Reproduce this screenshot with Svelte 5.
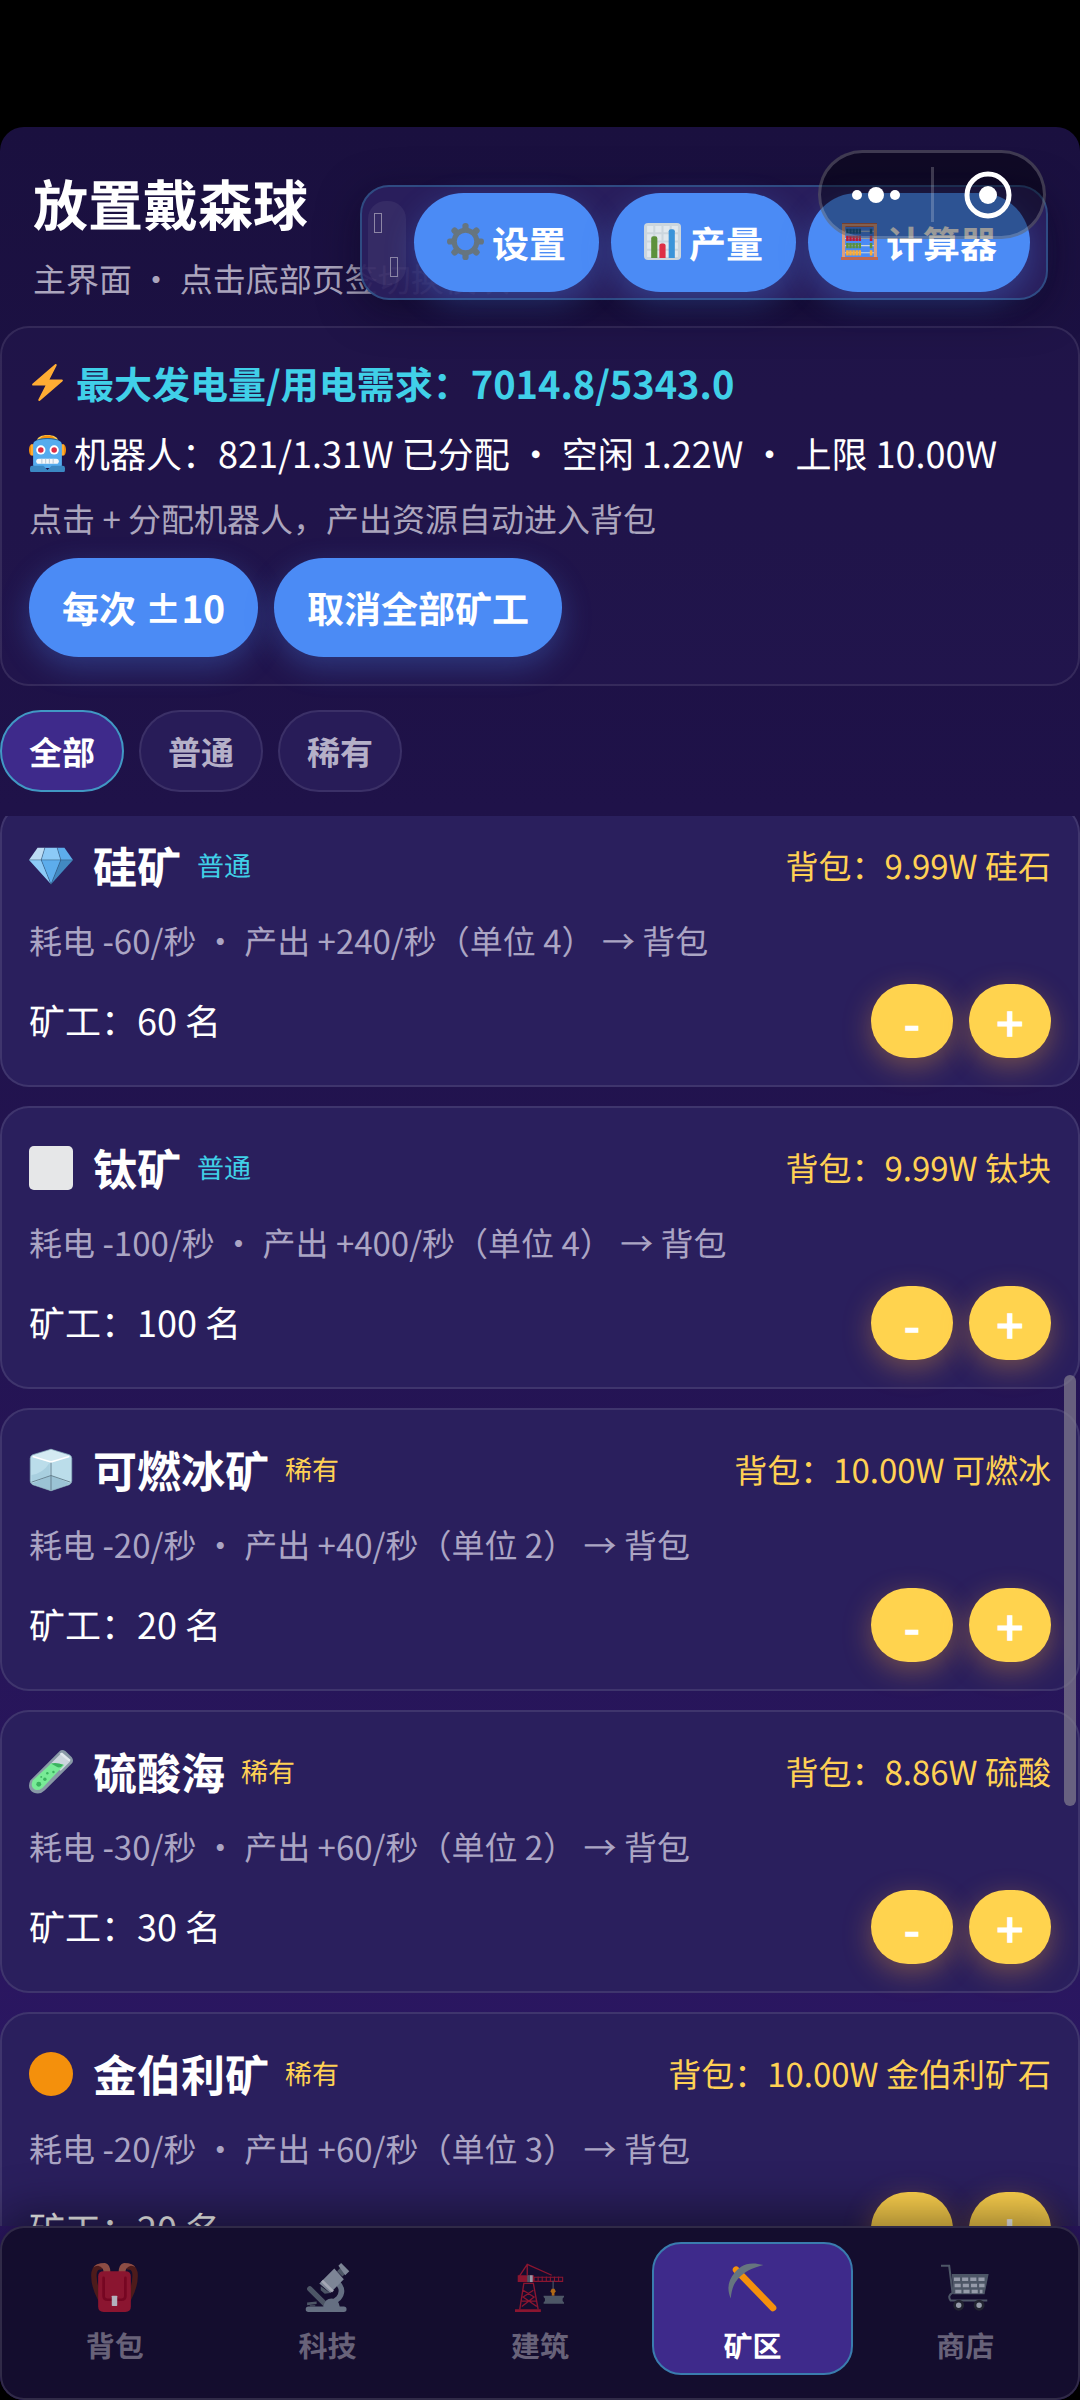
<script lang="ts">
  import { onMount } from "svelte";

  interface Mine {
    icon: string;
    name: string;
    rare: boolean;
    power: number;
    output: number;
    unit: number;
    workers: number;
    stock: string;
    item: string;
  }

  const mines: Mine[] = [
    { icon: "gem", name: "硅矿", rare: false, power: 60, output: 240, unit: 4, workers: 60, stock: "9.99W", item: "硅石" },
    { icon: "square", name: "钛矿", rare: false, power: 100, output: 400, unit: 4, workers: 100, stock: "9.99W", item: "钛块" },
    { icon: "ice", name: "可燃冰矿", rare: true, power: 20, output: 40, unit: 2, workers: 20, stock: "10.00W", item: "可燃冰" },
    { icon: "tube", name: "硫酸海", rare: true, power: 30, output: 60, unit: 2, workers: 30, stock: "8.86W", item: "硫酸" },
    { icon: "circle", name: "金伯利矿", rare: true, power: 20, output: 60, unit: 3, workers: 20, stock: "10.00W", item: "金伯利矿石" },
  ];

  const tools = [
    { icon: "gear", label: "设置" },
    { icon: "chart", label: "产量" },
    { icon: "abacus", label: "计算器" },
  ];

  const tabs = [
    { icon: "backpack", label: "背包" },
    { icon: "microscope", label: "科技" },
    { icon: "crane", label: "建筑" },
    { icon: "pick", label: "矿区" },
    { icon: "cart", label: "商店" },
  ];

  const filters = ["全部", "普通", "稀有"];

  let filter = $state("全部");
  let tab = $state("矿区");
  let list: HTMLElement;

  let shown = $derived(
    mines.filter((m) => filter === "全部" || m.rare === (filter === "稀有"))
  );

  // 恢复上次的滚动位置
  onMount(() => {
    list.scrollTop = 12;
  });
</script>

{#snippet icon(name: string)}
  <svg class="icon" viewBox="0 0 36 36" aria-hidden="true">
    {#if name === "bolt"}
      <path fill="#ffac33" d="M32.938 15.651C32.792 15.26 32.418 15 32 15H19.925L26.89 1.458c.219-.426.106-.947-.271-1.243C26.437.071 26.218 0 26 0c-.233 0-.466.082-.653.243L18 6.588 3.347 19.243c-.316.273-.43.714-.284 1.105S3.582 21 4 21h12.075L9.11 34.542c-.219.426-.106.947.271 1.243.182.144.401.215.619.215.233 0 .466-.082.653-.243L18 29.412l14.653-12.655c.317-.273.43-.714.285-1.106z" />
    {:else if name === "robot"}
      <ellipse fill="#f4900c" cx="33.5" cy="14.5" rx="2.5" ry="5.5" />
      <ellipse fill="#f4900c" cx="2.5" cy="14.5" rx="2.5" ry="5.5" />
      <path fill="#ffac33" d="M34 19a1 1 0 0 1-1 1h-3a1 1 0 0 1-1-1v-9a1 1 0 0 1 1-1h3a1 1 0 0 1 1 1v9zM7 19a1 1 0 0 1-1 1H3a1 1 0 0 1-1-1v-9a1 1 0 0 1 1-1h3a1 1 0 0 1 1 1v9z" />
      <path fill="#ffcc4d" d="M28 5c0 2.8-4.5 4-10 4S8 7.800 8 5s4.5-5 10-5 10 2.2 10 5z" />
      <path fill="#f4900c" d="M25 4.1c0 2-3.1 2.9-7 2.9s-7-.9-7-2.9S14.1.5 18 .5s7 1.600 7 3.6z" />
      <path fill="#269" d="M30.5 6.5C28 3.800 24 3 18 3S8 3.800 5.5 6.500L5 11h26z" />
      <path fill="#55acee" d="M30 6c-3-1-7-2-12-2S9 5 6 6c-2 .7-2 3-2 5v18c0 2 1 3 3 3h22c2 0 3-1 3-3V11c0-2 0-4.300-2-5z" />
      <path fill="#3b88c3" d="M35 33v-1a2 2 0 0 0-2-2H22l-4 4-4-4H3a2 2 0 0 0-2 2v1c0 1.100-.1 3 1 3h32c1.100 0 1-1.900 1-3z" />
      <circle fill="#fff" cx="24.5" cy="14.5" r="4.5" />
      <circle fill="#dd2e44" cx="24.5" cy="14.5" r="2.7" />
      <circle fill="#fff" cx="11.5" cy="14.5" r="4.5" />
      <circle fill="#dd2e44" cx="11.5" cy="14.5" r="2.7" />
      <rect fill="#f5f8fa" x="7" y="23" width="22" height="5" rx="2.5" />
      <path stroke="#b8cbd8" d="M12.5 23v5M16.2 23v5M19.8 23v5M23.5 23v5" />
    {:else if name === "gear"}
      <g fill="#66757f">
        {#each [0, 45, 90, 135, 180, 225, 270, 315] as angle}
          <path transform="rotate({angle} 18 18)" d="M15 8V2.5Q15 0 18 0t3 2.5V8z" />
        {/each}
      </g>
      <circle cx="18" cy="18" r="11" fill="none" stroke="#66757f" stroke-width="5" />
    {:else if name === "chart"}
      <rect fill="#ccd6dd" width="36" height="36" rx="4" />
      <path fill="#e1e8ed" d="M3 3h6v6H3zM11 3h6v6h-6zM19 3h6v6h-6zM27 3h6v6h-6zM3 11h6v6H3zM11 11h6v6h-6zM19 11h6v6h-6zM27 11h6v6h-6zM3 19h6v6H3zM11 19h6v6h-6zM19 19h6v6h-6zM27 19h6v6h-6zM3 27h6v6H3zM11 27h6v6h-6zM19 27h6v6h-6zM27 27h6v6h-6z" />
      <path fill="#5c913b" d="M7 34V15q0-2 2-2h2q2 0 2 2v19z" />
      <path fill="#dd2e44" d="M15 34V22q0-2 2-2h2q2 0 2 2v12z" />
      <path fill="#3b94d9" d="M24 34V8q0-2 2-2h2q2 0 2 2v26z" />
    {:else if name === "abacus"}
      <path stroke="#ccd6dd" d="M4 8h28M4 15h28M4 22h28M4 29h28" />
      <path fill="none" stroke="#d99e82" stroke-width="3" d="M2.5 34V2h31v32" />
      <path stroke="#c1694f" d="M1 .5h34M4.5 3.500h27" />
      <g stroke-width="5" stroke-dasharray="2.5 .5">
        <path stroke="#226699" d="M5 8h15M28 8h3" />
        <path stroke="#be1931" d="M5 15h15M28 15h3" />
        <path stroke="#5c913b" d="M5 22h15M28 22h3" />
        <path stroke="#ffac33" d="M5 29h15M28 29h3" />
      </g>
      <path fill="#c1694f" d="M0 33h36v3H0z" />
    {:else if name === "gem"}
      <path fill="#bdddf4" d="M13 3H7L0 13h10z" />
      <path fill="#5dadec" d="M36 13 29 3h-6l3 10z" />
      <path fill="#8ccaf7" d="M26 13 23 3H13l-3 10zM0 13l18 20-8-20z" />
      <path fill="#4289c1" d="M36 13 18 33l8-20z" />
      <path fill="#5dadec" d="M26 13H10l8 20z" />
      <path fill="none" stroke="#27506e" stroke-width=".4" d="M0 13h36M13 3l-3 10 8 20 8-20-3-10" />
    {:else if name === "square"}
      <rect fill="#e6e7e8" width="36" height="36" rx="4" />
    {:else if name === "ice"}
      <path fill="#bbddea" d="M3 5.500 18 1l15 4.5q2 1 2 3V27q0 2-2 3l-15 5-15-5q-2-1-2-3V8.500q0-2 2-3z" />
      <path fill="#d4eaf2" d="M2 6.500 18 1l16 5.5L18 12z" />
      <path fill="#9bc3d5" d="m2 29 16-6.5L34 29l-16 6z" />
      <path fill="#a8cfdf" d="M2 22q9-1 15-10v11L2 28z" />
      <path fill="none" stroke="#fff" stroke-width="1.2" d="m3 7 15 4.5L33 7" />
      <path fill="none" stroke="#5d7785" stroke-width=".7" d="m2 28 16-5.5L34 28M18 12v23" />
      <path fill="none" stroke="#88a9b8" stroke-width=".6" d="M3 5.500 18 1l15 4.5q2 1 2 3V27q0 2-2 3l-15 5-15-5q-2-1-2-3V8.500q0-2 2-3z" />
    {:else if name === "tube"}
      <path fill="#8899a6" d="M25 1q2-2 5 0l5 5q2 3 0 5L13 33q-4 4-9 2-6-3-3-10z" />
      <path fill="#ccd6dd" d="m26 3 7 7-7 7-9-5z" />
      <path fill="#78eb96" d="m18 11 11 1L11 31q-4 3-7 1t-1-7z" />
      <path fill="#3bb35f" d="M18 11q5-1 10 1-2 3-5 2z" />
      <circle fill="#3bb35f" cx="8" cy="28" r="2" />
      <circle fill="#3bb35f" cx="13" cy="24" r="1.4" />
      <circle fill="#3bb35f" cx="15" cy="19" r="1" />
      <circle fill="#3bb35f" cx="20" cy="18" r="1" />
      <circle fill="#3bb35f" cx="10" cy="22" r=".8" />
      <path fill="#e1e8ed" d="m27 2 7 6-1 2-8-7z" />
    {:else if name === "circle"}
      <circle fill="#f4900c" cx="18" cy="18" r="18" />
    {:else if name === "backpack"}
      <path fill="none" stroke="#662113" stroke-width="4" d="M8 27Q2 16 3 7q1-5 6-4M28 27q6-11 5-20-1-5-6-4" />
      <path fill="#c1694f" d="M2 4q2-4 9-4 4 1 4 7h-5q0-4-4-5-3 0-4 2zM34 4q-2-4-9-4-4 1-4 7h5q0-4 4-5 3 0 4 2z" />
      <path fill="#be1931" d="M10 6h16q4 0 4 4v22q0 4-4 4H10q-4 0-4-4V10q0-4 4-4z" />
      <path fill="none" stroke="#a0041e" stroke-width="2" stroke-linecap="round" d="M10 11v13q0 3 3 3h10q3 0 3-3V11" />
      <rect fill="#f5f8fa" x="16" y="24" width="4" height="7.5" rx=".5" />
    {:else if name === "microscope"}
      <path fill="none" stroke="#8899a6" stroke-width="4" d="M25 14q6 6 1 12l-5 4" />
      <path stroke="#66757f" stroke-width="4" stroke-linecap="round" d="m5 19 12 12" />
      <path fill="#8899a6" d="M4 32h11q1-6 6-6t6 6h3a2 2 0 0 1 0 4H4a2 2 0 0 1 0-4z" />
      <path fill="#66757f" d="m3 29 7-.8v2L3 31zM5 31h4v1H5zM13 17l7 5-4 .5-3-2.5zM25 6l3-3 4 4-3 3z" />
      <path fill="#aab8c2" d="m23 4 7 8-10 10-8-7zM26 2l2-2 6 6-3 3z" />
      <path stroke="#e1e8ed" stroke-width="2" d="m14 13 8 8" />
    {:else if name === "crane"}
      <g fill="none" stroke="#be1931">
        <path d="m3.500 34 3-19h7l3.500 19M6 20l8 5-9 7M13.500 20 6 25l10 7M5 28h11M3 10l6-9 18 8M9 1v8" />
        <path stroke-width=".8" d="M14 10.500h21v3H14zM17 10v4M20 10v4M23 10v4M26 10v4M29 10v4M32 10v4" />
      </g>
      <path fill="#be1931" d="M2 9h12v5H2zM0 34h19v2H0z" />
      <path fill="#ccd6dd" d="M11 9h2v5h-2z" />
      <path fill="#66757f" d="M9 9h2v5H9z" />
      <path stroke="#66757f" stroke-width=".8" d="M28 13v7" />
      <path fill="#f4900c" d="M27 19h2l1 2-1 1v2h-2v-2l-1-1z" />
      <path fill="#66757f" d="M21 24h15v1l-1 1v2l1 1v1H21v-1l1-1v-2l-1-1z" />
    {:else if name === "pick"}
      <path stroke="#f4900c" stroke-width="5" stroke-linecap="round" d="m6 5 27 28" />
      <path fill="#66757f" d="M26 1.500C14-2 8 3 5 7c-5 6-6 12-3 19C3 17 5 14 9 10S17 4 26 1.500z" />
    {:else if name === "cart"}
      <path fill="none" stroke="#66757f" stroke-width="1.5" d="M0 2h6l2.5 20q-4 2-1.5 5.500h27" />
      <path fill="#66757f" d="M8 8h27l-3 15H9z" />
      <path stroke="#ccd6dd" stroke-width="2.6" stroke-dasharray="4.5 1.5" d="M9.500 12h23M10 16.500h22M10.500 21h20" />
      <circle fill="#ccd6dd" cx="13" cy="31" r="3" stroke="#292f33" stroke-width="2" />
      <circle fill="#ccd6dd" cx="28" cy="31" r="3" stroke="#292f33" stroke-width="2" />
    {/if}
  </svg>
{/snippet}

<div class="screen" lang="zh-CN">
  <div class="app">
    <header>
      <h1>放置戴森球</h1>
      <p>主界面 • 点击底部页签切换模块</p>
      <div class="toolbar">
        <div class="handle"><i></i><i></i></div>
        {#each tools as tool}
          <button class="pill">{@render icon(tool.icon)}{tool.label}</button>
        {/each}
      </div>
    </header>

    <div class="capsule">
      <button aria-label="更多">
        <svg width="48" height="48" viewBox="0 0 48 48" fill="#fff">
          <circle cx="5" cy="24" r="5" />
          <circle cx="24" cy="24" r="8" />
          <circle cx="43" cy="24" r="5" />
        </svg>
      </button>
      <button aria-label="关闭">
        <svg width="48" height="48" viewBox="0 0 48 48" fill="#fff">
          <circle cx="24" cy="24" r="21" fill="none" stroke="#fff" stroke-width="5" />
          <circle cx="24" cy="24" r="9" />
        </svg>
      </button>
    </div>

    <section class="summary">
      <div class="power">{@render icon("bolt")}最大发电量/用电需求：7014.8/5343.0</div>
      <div class="robots">{@render icon("robot")}机器人：821/1.31W 已分配 • 空闲 1.22W • 上限 10.00W</div>
      <div class="hint">点击 + 分配机器人，产出资源自动进入背包</div>
      <div class="actions">
        <button class="pill">每次 ±10</button>
        <button class="pill">取消全部矿工</button>
      </div>
    </section>

    <div class="filters">
      {#each filters as f}
        <button class:active={filter === f} onclick={() => (filter = f)}>{f}</button>
      {/each}
    </div>

    <main>
      <div class="list" bind:this={list}>
        {#each shown as mine (mine.name)}
          <article>
            <div class="head">
              {@render icon(mine.icon)}
              <h2>{mine.name}</h2>
              <span class="tag" class:rare={mine.rare}>{mine.rare ? "稀有" : "普通"}</span>
              <span class="stock">背包：{mine.stock} {mine.item}</span>
            </div>
            <div class="meta">耗电 -{mine.power}/秒 • 产出 +{mine.output}/秒（单位 {mine.unit}） → 背包</div>
            <div class="workers">
              <span>矿工：{mine.workers} 名</span>
              <button class="step" aria-label="减少">-</button>
              <button class="step" aria-label="增加">+</button>
            </div>
          </article>
        {/each}
      </div>
      <div class="thumb"></div>
    </main>

    <nav>
      {#each tabs as t}
        <button class:active={tab === t.label} onclick={() => (tab = t.label)}>
          {@render icon(t.icon)}
          <span>{t.label}</span>
        </button>
      {/each}
    </nav>
  </div>
</div>

<style>
  :global(body) {
    margin: 0;
    background: #000;
  }

  .screen {
    box-sizing: border-box;
    height: 100vh;
    padding-top: 127px;
    background: #000;
    color: #fff;
    font-family: "Noto Sans CJK SC", sans-serif;
    font-size: 33px;
    text-rendering: geometricPrecision;
  }

  .app {
    position: relative;
    height: 100%;
    display: flex;
    flex-direction: column;
    border-radius: 24px;
    overflow: hidden;
    background: linear-gradient(#1a103f, #1f1249 30%, #2e1868);
  }

  h1,
  h2,
  p {
    margin: 0;
  }

  button {
    font: inherit;
    color: inherit;
    border: none;
    padding: 0;
    cursor: pointer;
    white-space: nowrap;
    text-rendering: inherit;
  }

  .icon {
    display: block;
    flex: none;
    width: 37px;
    height: 37px;
  }

  header {
    position: relative;
    padding: 38px 33px 24px;
  }

  h1 {
    font-size: 55px;
    line-height: 74px;
  }

  header p {
    margin-top: 15px;
    line-height: 48px;
    color: #aba5bd;
  }

  .toolbar {
    position: absolute;
    top: 58px;
    right: 32px;
    display: flex;
    align-items: center;
    gap: 12px;
    padding: 6px 16px 6px 6px;
    border: 2px solid rgba(64, 196, 230, 0.28);
    border-radius: 29px;
    background: rgba(43, 31, 94, 0.94);
    box-shadow: 0 10px 40px rgba(10, 6, 30, 0.5);
  }

  .handle {
    display: flex;
    flex-direction: column;
    justify-content: space-between;
    box-sizing: border-box;
    width: 38px;
    height: 84px;
    margin-right: -4px;
    padding: 12px 8px 8px 6px;
    border-radius: 18px;
    background: rgba(255, 255, 255, 0.06);
  }

  .handle i {
    width: 6px;
    height: 18px;
    border: 1px solid #8d86a5;
  }

  .handle i:last-child {
    align-self: flex-end;
  }

  .pill {
    display: flex;
    align-items: center;
    gap: 8px;
    height: 99px;
    padding: 0 33px 2px;
    border-radius: 50px;
    background: #4b8bf5;
    box-shadow: 0 10px 30px rgba(75, 139, 245, 0.3);
    font-size: 37px;
    font-weight: 700;
  }

  .capsule {
    position: absolute;
    top: 23px;
    right: 34px;
    display: flex;
    box-sizing: border-box;
    width: 228px;
    height: 89px;
    padding: 14px 0;
    border: 3px solid rgba(255, 255, 255, 0.2);
    border-radius: 45px;
    background: rgba(0, 0, 0, 0.4);
  }

  .capsule button {
    flex: 1;
    display: flex;
    align-items: center;
    justify-content: center;
    background: none;
  }

  .capsule button + button {
    border-left: 3px solid rgba(255, 255, 255, 0.2);
  }

  .summary {
    padding: 27px;
    border: 2px solid rgba(255, 255, 255, 0.09);
    border-radius: 29px;
    background: rgba(42, 31, 93, 0.25);
  }

  .power,
  .robots {
    display: flex;
    align-items: center;
    gap: 8px;
  }

  .power {
    gap: 10px;
    height: 55px;
    color: #40d0e8;
    font-size: 38px;
    font-weight: 700;
  }

  .robots {
    height: 56px;
    margin-top: 15px;
    font-size: 36px;
  }

  .hint {
    margin-top: 13px;
    line-height: 48px;
    color: #aba5bd;
  }

  .actions {
    display: flex;
    gap: 16px;
    margin-top: 16px;
  }

  .filters {
    display: flex;
    gap: 15px;
    padding: 24px 0;
  }

  .filters button {
    height: 82px;
    padding: 0 27px;
    border: 2px solid rgba(255, 255, 255, 0.09);
    border-radius: 41px;
    background: #281c58;
    color: #b5b0c8;
    font-weight: 700;
  }

  .filters button.active {
    border-color: #4198c4;
    background: #3e2a8b;
    color: #fff;
  }

  main {
    position: relative;
    flex: 1;
    min-height: 0;
  }

  .list {
    display: flex;
    flex-direction: column;
    gap: 19px;
    height: 100%;
    overflow-y: auto;
    scrollbar-width: none;
  }

  .thumb {
    position: absolute;
    top: 559px;
    right: 4px;
    width: 12px;
    height: 431px;
    border-radius: 6px;
    background: rgba(125, 120, 140, 0.75);
  }

  article {
    display: flex;
    flex: none;
    flex-direction: column;
    gap: 16px;
    padding: 27px;
    border: 2px solid rgba(255, 255, 255, 0.1);
    border-radius: 29px;
    background: #2a1f5d;
  }

  .head {
    display: flex;
    align-items: center;
    height: 66px;
  }

  .head .icon {
    width: 44px;
    height: 44px;
  }

  .head h2,
  .head span,
  .workers span {
    padding-bottom: 3px;
  }

  h2 {
    margin-left: 20px;
    font-size: 44px;
  }

  .tag {
    margin-left: 16px;
    color: #40d0e8;
    font-size: 27px;
  }

  .tag.rare,
  .stock {
    color: #ffd154;
  }

  .stock {
    margin-left: auto;
  }

  .meta {
    padding-bottom: 3px;
    line-height: 50px;
    color: #aba5c4;
  }

  .workers {
    display: flex;
    align-items: center;
    gap: 16px;
    font-size: 36px;
  }

  .workers span {
    flex: 1;
  }

  .step {
    width: 82px;
    height: 74px;
    border-radius: 37px;
    background: #ffd34e;
    box-shadow: 0 8px 28px rgba(255, 170, 50, 0.35);
    font-size: 48px;
    font-weight: 700;
    line-height: 74px;
  }

  nav {
    position: relative;
    display: flex;
    gap: 11px;
    padding: 14px 12px 23px;
    border: 2px solid rgba(255, 255, 255, 0.12);
    border-radius: 24px;
    background: #140d2e;
    box-shadow: 0 -12px 48px rgba(0, 0, 0, 0.45);
  }

  nav button {
    flex: 1;
    display: flex;
    flex-direction: column;
    align-items: center;
    box-sizing: border-box;
    height: 133px;
    padding-top: 19px;
    border: 2px solid transparent;
    border-radius: 29px;
    background: none;
    color: #686279;
    font-size: 29px;
    font-weight: 700;
    line-height: 42px;
  }

  nav .icon {
    width: 49px;
    height: 49px;
    margin-bottom: 12px;
    opacity: 0.7;
  }

  nav button.active {
    border-color: #3a7cae;
    background: #3e2a8b;
    color: #fff;
  }

  nav .active .icon {
    opacity: 1;
  }
</style>
